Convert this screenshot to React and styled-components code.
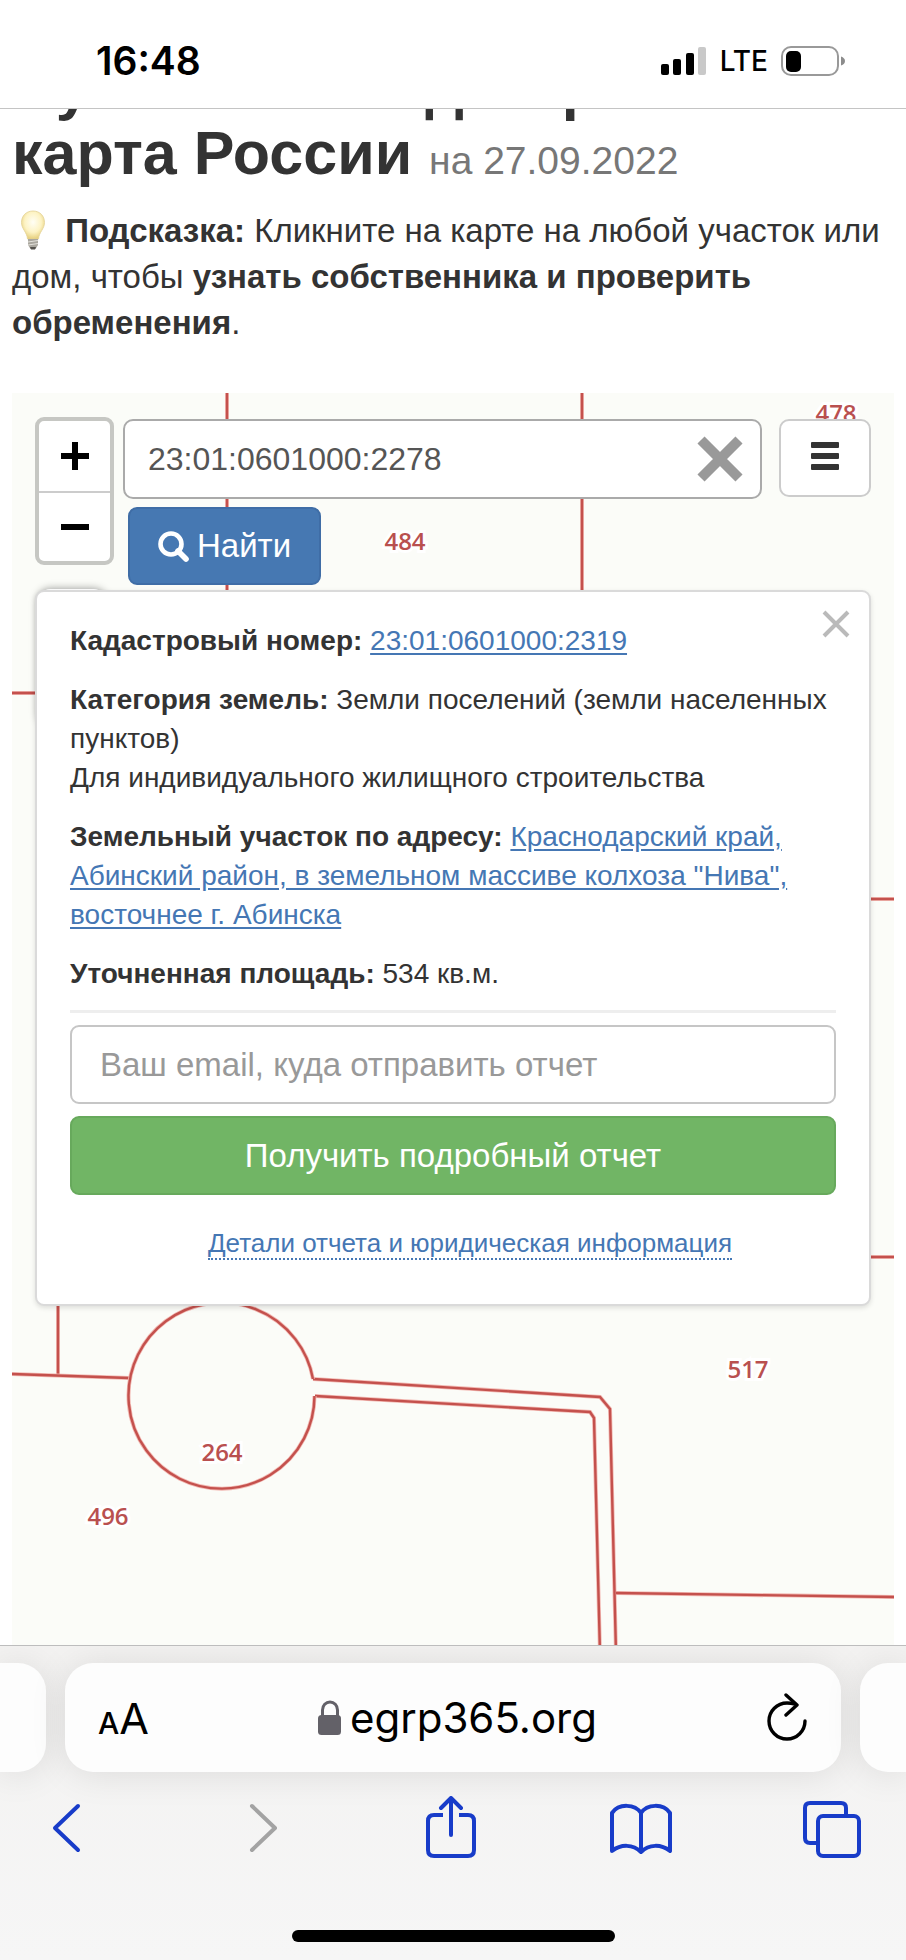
import { useState } from 'react';
import styled, { createGlobalStyle } from 'styled-components';

const boundaries = [
  'M570 0V206',
  'M215 0V206',
  'M0 300H40',
  'M850 506H882',
  'M850 864H882',
  'M46 880V981',
  'M0 981L117 985',
  'M301 986L588 1004L598 1016L604 1260',
  'M303 1003L578 1019L582 1025L588 1260',
  'M604 1200L882 1204',
  'M301 986A93 93 0 1 0 302.500 1003',
];

const plots = [
  { number: '484', x: 393, y: 157 },
  { number: '478', x: 824, y: 29 },
  { number: '517', x: 736, y: 985 },
  { number: '264', x: 210, y: 1068 },
  { number: '496', x: 96, y: 1132 },
];

export default function App() {
  const [search, setSearch] = useState('23:01:0601000:2278');
  const [email, setEmail] = useState('');
  const [showPopup, setShowPopup] = useState(true);

  return (
    <Screen>
      <GlobalStyle />
      <StatusBar>
        <Time>16:48</Time>
        <Indicators>
          <svg width="46" height="30" aria-hidden="true">
            <rect x="0" y="18" width="8" height="11" rx="2" />
            <rect x="12" y="13" width="8" height="16" rx="2" />
            <rect x="25" y="7" width="8" height="22" rx="2" />
            <rect x="37" y="1" width="8" height="28" rx="2" fill="#c9c9c9" />
          </svg>
          <Network>LTE</Network>
          <svg width="65" height="30" aria-hidden="true">
            <rect x="1" y="1" width="56" height="28" rx="9" fill="none" stroke="#999" strokeWidth="2" />
            <rect x="5" y="5" width="15" height="21" rx="5" />
            <path d="M60 10.5Q64 12 64 15T60 19.5Z" fill="#8c8c8c" />
          </svg>
        </Indicators>
      </StatusBar>

      <Page>
        <Title>
          Публичная кадастровая карта России <small>на 27.09.2022</small>
        </Title>
        <Hint>
          <Bulb /> <b>Подсказка:</b> Кликните на карте на любой участок или дом, чтобы{' '}
          <b>узнать собственника и проверить обременения</b>.
        </Hint>

        <MapPanel>
          <MapCanvas aria-hidden="true">
            {boundaries.map((d) => (
              <g key={d} fill="none">
                <path d={d} stroke="#f2b9b3" strokeWidth="4" />
                <path d={d} stroke="#c4514d" strokeWidth="2.4" />
              </g>
            ))}
            {plots.map((plot) => (
              <PlotNumber key={plot.number} x={plot.x} y={plot.y}>
                {plot.number}
              </PlotNumber>
            ))}
          </MapCanvas>

          <Controls>
            <SideControls>
              <Zoom>
                <ZoomButton type="button" aria-label="Приблизить">
                  <svg width="28" height="28">
                    <path d="M0 14H28M14 0V28" stroke="#000" strokeWidth="6" />
                  </svg>
                </ZoomButton>
                <ZoomButton type="button" aria-label="Отдалить">
                  <svg width="28" height="28">
                    <path d="M0 14H28" stroke="#000" strokeWidth="6" />
                  </svg>
                </ZoomButton>
              </Zoom>
              <Layers />
            </SideControls>

            <SearchForm onSubmit={(e) => e.preventDefault()}>
              <SearchField>
                <SearchInput
                  type="text"
                  aria-label="Кадастровый номер или адрес"
                  value={search}
                  onChange={(e) => setSearch(e.target.value)}
                />
                <ClearButton type="button" aria-label="Очистить" onClick={() => setSearch('')}>
                  <svg width="46" height="46">
                    <path d="M4 4L42 42M42 4L4 42" stroke="#999" strokeWidth="10" />
                  </svg>
                </ClearButton>
              </SearchField>
              <FindButton type="submit">
                <svg width="31" height="31" fill="none" stroke="#fff" aria-hidden="true">
                  <circle cx="13" cy="13" r="10.5" strokeWidth="4.6" />
                  <path d="M20 20L28 28" strokeWidth="5.6" strokeLinecap="round" />
                </svg>
                Найти
              </FindButton>
            </SearchForm>

            <MenuButton type="button" aria-label="Меню">
              <svg width="28" height="28" fill="#333">
                <rect width="28" height="6" rx="1" />
                <rect y="11" width="28" height="6" rx="1" />
                <rect y="22" width="28" height="6" rx="1" />
              </svg>
            </MenuButton>
          </Controls>

          {showPopup && (
            <Popup>
              <CloseButton type="button" aria-label="Закрыть" onClick={() => setShowPopup(false)}>
                <svg width="28" height="28">
                  <path d="M2 2L26 26M26 2L2 26" stroke="#bababa" strokeWidth="4" />
                </svg>
              </CloseButton>
              <p>
                <b>Кадастровый номер:</b> <a href="#plot">23:01:0601000:2319</a>
              </p>
              <p>
                <b>Категория земель:</b> Земли поселений (земли населенных пунктов)
                <br />
                Для индивидуального жилищного строительства
              </p>
              <p>
                <b>Земельный участок по адресу:</b>{' '}
                <a href="#address">
                  Краснодарский край, Абинский район, в земельном массиве колхоза "Нива", восточнее г. Абинска
                </a>
              </p>
              <p>
                <b>Уточненная площадь:</b> 534 кв.м.
              </p>
              <Report onSubmit={(e) => e.preventDefault()}>
                <EmailInput
                  type="email"
                  aria-label="Ваш email, куда отправить отчет"
                  placeholder="Ваш email, куда отправить отчет"
                  value={email}
                  onChange={(e) => setEmail(e.target.value)}
                />
                <ReportButton type="submit">Получить подробный отчет</ReportButton>
              </Report>
              <Details>
                <a href="#details">Детали отчета и юридическая информация</a>
              </Details>
            </Popup>
          )}
        </MapPanel>
      </Page>

      <BrowserBar>
        <Tabs>
          <SideTab $side="left" />
          <AddressBar>
            <TextSize type="button" aria-label="Размер текста">
              <small>A</small>A
            </TextSize>
            <Address href="#site">
              <svg width="24" height="36" aria-hidden="true">
                <path d="M4.5 17V10A7.5 8 0 0 1 19.5 10V17" fill="none" stroke="#636168" strokeWidth="3" />
                <rect y="15" width="23" height="20" rx="3.5" fill="#636168" />
              </svg>
              egrp365.org
            </Address>
            <IconButton type="button" aria-label="Обновить">
              <svg width="42" height="50" fill="none" stroke="#000" strokeWidth="3.4" strokeLinecap="round" strokeLinejoin="round">
                <path d="M29 11Q25 10 21 10A18 18 0 1 0 39 28" />
                <path d="M20 2L31 12L20 22" />
              </svg>
            </IconButton>
          </AddressBar>
          <SideTab $side="right" />
        </Tabs>

        <Navigation>
          <IconButton type="button" aria-label="Назад">
            <NavIcon>
              <path d="M43 10L20 32L43 54" />
            </NavIcon>
          </IconButton>
          <IconButton type="button" aria-label="Вперед" disabled>
            <NavIcon $muted>
              <path d="M26 10L49 32L26 54" />
            </NavIcon>
          </IconButton>
          <IconButton type="button" aria-label="Поделиться">
            <NavIcon>
              <path d="M26 19H17Q11 19 11 25V54Q11 60 17 60H51Q57 60 57 54V25Q57 19 51 19H42" strokeLinecap="butt" />
              <path d="M34 39V2M24 12L34 2L44 12" />
            </NavIcon>
          </IconButton>
          <IconButton type="button" aria-label="Закладки">
            <NavIcon>
              <path d="M33 17C27 8 11 7 4 17V55C13 48 25 48 33 56C41 48 53 48 62 55V17C55 7 39 8 33 17V56" />
            </NavIcon>
          </IconButton>
          <IconButton type="button" aria-label="Вкладки">
            <NavIcon>
              <rect x="19" y="20" width="41" height="40" rx="5" />
              <path d="M47 19V12Q47 7 42 7H11Q6 7 6 12V42Q6 47 11 47H18" />
            </NavIcon>
          </IconButton>
        </Navigation>
        <HomeIndicator />
      </BrowserBar>
    </Screen>
  );
}

function Bulb() {
  return (
    <BulbIcon viewBox="0 0 44 40" aria-hidden="true">
      <defs>
        <radialGradient id="glass" cx="0.5" cy="0.4" r="0.6">
          <stop offset="0" stopColor="#fffef5" />
          <stop offset="0.6" stopColor="#fdf3c4" />
          <stop offset="1" stopColor="#e6cf7c" />
        </radialGradient>
      </defs>
      <path d="M21 1C28 1 32.500 6 32.500 12.500C32.500 19 27 22 26.500 29H15.500C15 22 9.500 19 9.500 12.500C9.500 6 14 1 21 1Z" fill="url(#glass)" stroke="#e3d294" strokeWidth="0.8" />
      <path d="M16 29H26V35L23.500 39H18.500L16 35Z" fill="#aaa79f" />
      <path d="M16 32L26 30.500M16 35L26 33.500" stroke="#e4e2dc" strokeWidth="1" />
      <path d="M18 37H24L23 39.500H19Z" fill="#55524e" />
    </BulbIcon>
  );
}

const GlobalStyle = createGlobalStyle`
  * {
    box-sizing: border-box;
  }
  body {
    margin: 0;
    background: #fff;
    color: #333;
    font-family: 'Liberation Sans', Arial, sans-serif;
  }
  button, input {
    margin: 0;
    font-family: inherit;
  }
  svg {
    display: block;
  }
`;

const Screen = styled.div`
  display: flex;
  flex-direction: column;
  min-height: 100vh;
`;

const StatusBar = styled.header`
  position: relative;
  z-index: 1;
  display: flex;
  align-items: flex-end;
  justify-content: space-between;
  height: 109px;
  padding: 0 60px 32px 96px;
  background: #fff;
  border-bottom: 1px solid #c4c4c4;
  color: #000;
  font-family: Inter, sans-serif;
`;

const Time = styled.div`
  font-size: 39px;
  font-weight: 600;
  line-height: 30px;
`;

const Indicators = styled.div`
  display: flex;
  align-items: center;
  gap: 13px;
`;

const Network = styled.span`
  font-size: 28px;
  font-weight: 500;
  line-height: 30px;
`;

const Page = styled.main`
  flex: 1;
  display: flex;
  flex-direction: column;
  padding: 0 12px;
`;

const Title = styled.h1`
  margin: -55px 0 22px;
  font-size: 61px;
  font-weight: 700;
  line-height: 66px;

  small {
    color: #777;
    font-size: 39px;
    font-weight: 400;
    line-height: 39px;
  }
`;

const Hint = styled.p`
  margin: 0 0 47px;
  font-size: 33px;
  line-height: 46px;
`;

const BulbIcon = styled.svg`
  display: inline-block;
  width: 44px;
  height: 40px;
  vertical-align: -8px;
`;

const MapPanel = styled.section`
  position: relative;
  flex: 1;
  padding: 24px 23px 80px;
  background: #fbfcf8;
  overflow: hidden;
`;

const MapCanvas = styled.svg`
  position: absolute;
  top: 0;
  left: 0;
  width: 100%;
  height: 100%;
`;

const PlotNumber = styled.text`
  fill: #b9504f;
  stroke: #fff;
  stroke-width: 6px;
  paint-order: stroke;
  font-family: 'Open Sans', 'Noto Sans', sans-serif;
  font-size: 24px;
  font-weight: 600;
  text-anchor: middle;
`;

const Controls = styled.div`
  position: relative;
  display: flex;
  align-items: flex-start;
`;

const SideControls = styled.div`
  position: relative;
  margin-right: 9px;
`;

const Zoom = styled.div`
  width: 79px;
  border: 4px solid #c6c7c3;
  border-radius: 9px;
  background: #fff;
`;

const ZoomButton = styled.button`
  display: flex;
  align-items: center;
  justify-content: center;
  width: 100%;
  height: 70px;
  padding: 0;
  border: none;
  background: none;

  & + & {
    border-top: 2px solid #ccc;
  }
`;

const Layers = styled.div`
  position: absolute;
  top: 172px;
  left: 3px;
  width: 68px;
  height: 136px;
  border-radius: 12px;
  background: #fff;
  box-shadow: 0 0 9px rgba(0, 0, 0, 0.4);
`;

const SearchForm = styled.form`
  flex: 1;
  margin: 2px 17px 0 0;
`;

const SearchField = styled.div`
  display: flex;
  align-items: center;
  height: 80px;
  padding: 0 17px 0 23px;
  border: 2px solid #aaa;
  border-radius: 10px;
  background: #fff;
`;

const SearchInput = styled.input`
  flex: 1;
  min-width: 0;
  padding: 0;
  border: none;
  outline: none;
  background: none;
  color: #555;
  font-size: 32px;
`;

const ClearButton = styled.button`
  padding: 0;
  border: none;
  background: none;
`;

const FindButton = styled.button`
  display: flex;
  align-items: center;
  gap: 8px;
  height: 78px;
  margin: 8px 0 0 5px;
  padding: 0 28px;
  border: 2px solid #3f6da6;
  border-radius: 9px;
  background: #4678b2;
  color: #fff;
  font-size: 33px;
`;

const MenuButton = styled.button`
  display: flex;
  justify-content: center;
  width: 92px;
  height: 78px;
  margin-top: 2px;
  padding: 21px 0 0;
  border: 2px solid #ccc;
  border-radius: 10px;
  background: #fff;
`;

const Popup = styled.div`
  position: relative;
  margin-top: 5px;
  padding: 29px 33px 41px;
  border: 2px solid #dadada;
  border-radius: 9px;
  background: #fff;
  box-shadow: 0 2px 5px rgba(0, 0, 0, 0.12);
  font-size: 28px;
  line-height: 39px;

  p {
    margin: 0 0 20px;
  }
  a {
    color: #4577b4;
    text-underline-offset: 3px;
  }
`;

const CloseButton = styled.button`
  position: absolute;
  top: 18px;
  right: 19px;
  padding: 0;
  border: none;
  background: none;
`;

const Report = styled.form`
  display: flex;
  flex-direction: column;
  gap: 12px;
  margin-top: -3px;
  padding-top: 12px;
  border-top: 3px solid #eee;
`;

const EmailInput = styled.input`
  height: 79px;
  padding: 0 28px;
  border: 2px solid #c6c6c6;
  border-radius: 9px;
  color: #555;
  font-size: 33px;

  &::placeholder {
    color: #999;
  }
`;

const ReportButton = styled.button`
  height: 79px;
  border: 2px solid #67a95c;
  border-radius: 9px;
  background: #71b565;
  color: #fff;
  font-size: 33px;
`;

const Details = styled.div`
  padding: 29px 0 0 34px;
  font-size: 26px;
  text-align: center;

  a {
    border-bottom: 2px dotted #4577b4;
    text-decoration: none;
  }
`;

const BrowserBar = styled.footer`
  position: relative;
  padding: 17px 0 18px;
  border-top: 1px solid #bdbdbd;
  background: linear-gradient(#f3f2f1, #f6f6f6);
  overflow: hidden;
`;

const Tabs = styled.div`
  display: flex;
  gap: 19px;
`;

const SideTab = styled.div`
  width: 46px;
  border-radius: ${({ $side }) => ($side === 'left' ? '0 28px 28px 0' : '28px 0 0 28px')};
  background: #fdfdfd;
  box-shadow: 0 2px 36px rgba(0, 0, 0, 0.1);
`;

const AddressBar = styled.div`
  flex: 1;
  display: flex;
  align-items: center;
  justify-content: space-between;
  height: 109px;
  padding: 0 33px;
  border-radius: 28px;
  background: #fdfdfd;
  box-shadow: 0 2px 36px rgba(0, 0, 0, 0.1);
  font-family: Inter, sans-serif;
`;

const TextSize = styled.button`
  padding: 0;
  border: none;
  background: none;
  color: #000;
  font-size: 43px;

  small {
    font-size: 30px;
    font-weight: 500;
  }
`;

const Address = styled.a`
  display: flex;
  align-items: center;
  gap: 8px;
  color: #000;
  font-size: 42px;
  text-decoration: none;
`;

const IconButton = styled.button`
  padding: 0;
  border: none;
  background: none;
`;

const Navigation = styled.nav`
  display: flex;
  justify-content: space-between;
  padding: 24px 41px 0 35px;
`;

const NavIcon = styled.svg`
  width: 66px;
  height: 64px;
  fill: none;
  stroke: ${({ $muted }) => ($muted ? '#a3a3a3' : '#183cc9')};
  stroke-width: 4px;
  stroke-linecap: round;
  stroke-linejoin: round;
`;

const HomeIndicator = styled.div`
  width: 323px;
  height: 12px;
  margin: 70px auto 0;
  border-radius: 6px;
  background: #000;
`;
